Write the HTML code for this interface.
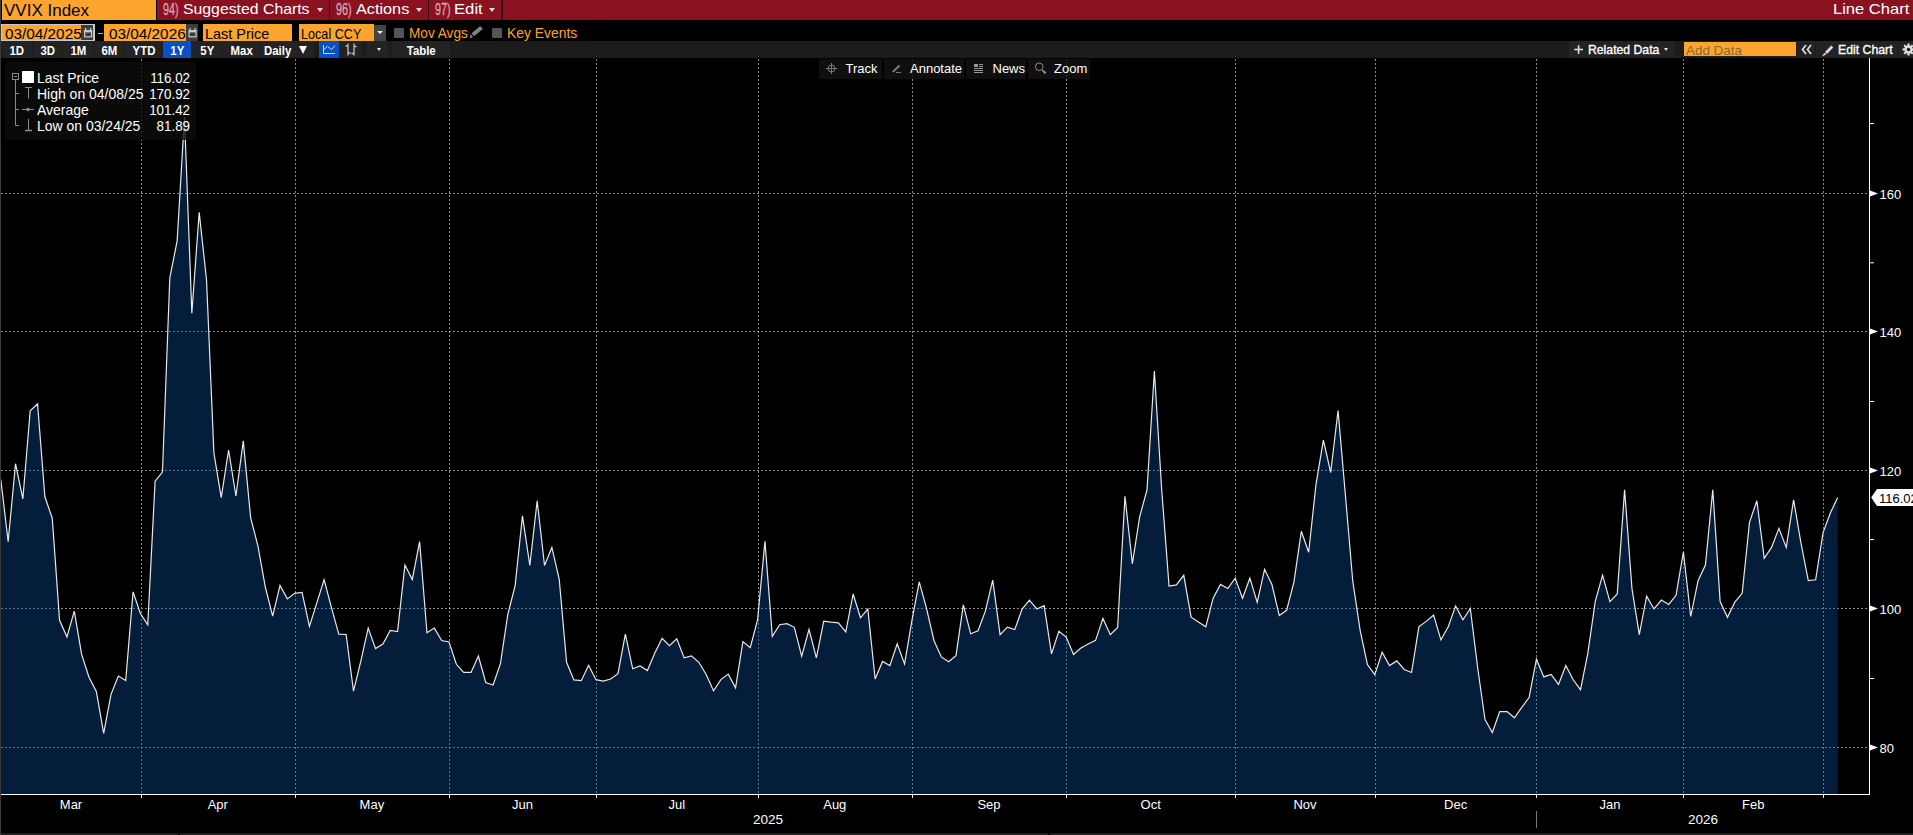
<!DOCTYPE html>
<html><head><meta charset="utf-8">
<style>
*{margin:0;padding:0;box-sizing:border-box}
html,body{width:1913px;height:835px;overflow:hidden;background:#000}
body{position:relative;font-family:"Liberation Sans",sans-serif;color:#fff}
.a{position:absolute;white-space:nowrap}
.btn{position:absolute;top:41px;height:17px;background:#232323;color:#fff;font-size:12px;line-height:17px;text-align:center;padding-top:1.5px}
.bt{display:inline-block;font-weight:bold;transform:scaleX(.95)}
.ml{position:absolute;top:797px;width:60px;text-align:center;font-size:13px;line-height:16px;color:#fff}
.g{stroke:#8a8a8a;stroke-width:1;stroke-dasharray:2 2}
.g2{stroke:#52739a;stroke-width:1;stroke-dasharray:2 2}
.yl{font-size:13px;fill:#fff;font-family:"Liberation Sans",sans-serif}
.tb{position:absolute;top:59px;height:20px;background:rgba(19,19,19,.8);font-size:13px;line-height:20px;color:#fff}
.lg{position:absolute;left:37px;width:151px;font-size:14.2px;line-height:16px;color:#fff}
.lt{display:inline-block;transform:scaleX(.985);transform-origin:0 0}
.lv{position:absolute;left:73px;width:80px;text-align:right;transform:scaleX(.94);transform-origin:100% 0}
</style></head><body>
<div class="a" style="left:0;top:0;width:1px;height:835px;background:#3a3a3a"></div>
<div class="a" style="left:1px;top:833px;width:177px;height:2px;background:#1e1e1e"></div>
<div class="a" style="left:180px;top:833px;width:868px;height:2px;background:#1e1e1e"></div>
<div class="a" style="left:1050px;top:833px;width:863px;height:2px;background:#1e1e1e"></div>

<!-- header row -->
<div class="a" style="left:2px;top:0;width:154px;height:20px;background:#fba52f"></div>
<div class="a" style="left:4.0px;top:2px;font-size:16.2px;line-height:16.2px;color:#000;transform:scaleX(1.05);transform-origin:0 0;">VVIX Index</div>
<div class="a" style="left:157px;top:0;width:1756px;height:20px;background:#8a1120"></div>
<div class="a" style="left:328.5px;top:0;width:1.5px;height:20px;background:#3a0a10"></div>
<div class="a" style="left:427.5px;top:0;width:1.5px;height:20px;background:#3a0a10"></div>
<div class="a" style="left:501px;top:0;width:2px;height:20px;background:#3a0a10"></div>
<div class="a" style="left:163px;top:1.6px;font-size:15.8px;line-height:15.8px;color:#d8a6b4;transform:scaleX(0.68);transform-origin:0 0;-webkit-text-stroke:0.3px #d8a6b4">94)</div>
<div class="a" style="left:183px;top:2.2px;font-size:14.5px;line-height:14.5px;color:#fff;transform:scaleX(1.09);transform-origin:0 0;">Suggested Charts</div>
<div class="a" style="left:316.5px;top:7.5px;border-left:3.0px solid transparent;border-right:3.0px solid transparent;border-top:4px solid #ddd"></div>
<div class="a" style="left:336px;top:1.6px;font-size:15.8px;line-height:15.8px;color:#d8a6b4;transform:scaleX(0.68);transform-origin:0 0;-webkit-text-stroke:0.3px #d8a6b4">96)</div>
<div class="a" style="left:356px;top:2.2px;font-size:14.5px;line-height:14.5px;color:#fff;transform:scaleX(1.12);transform-origin:0 0;">Actions</div>
<div class="a" style="left:415.5px;top:7.5px;border-left:3.0px solid transparent;border-right:3.0px solid transparent;border-top:4px solid #ddd"></div>
<div class="a" style="left:434.5px;top:1.6px;font-size:15.8px;line-height:15.8px;color:#d8a6b4;transform:scaleX(0.68);transform-origin:0 0;-webkit-text-stroke:0.3px #d8a6b4">97)</div>
<div class="a" style="left:454px;top:2.2px;font-size:14.5px;line-height:14.5px;color:#fff;transform:scaleX(1.15);transform-origin:0 0;">Edit</div>
<div class="a" style="left:488.5px;top:7.5px;border-left:3.0px solid transparent;border-right:3.0px solid transparent;border-top:4px solid #ddd"></div>
<div class="a" style="left:1832.5px;top:2.2px;font-size:14.5px;line-height:14.5px;color:#fff;transform:scaleX(1.14);transform-origin:0 0;">Line Chart</div>

<!-- row 2 -->
<div class="a" style="left:1px;top:24px;width:94px;height:17px;border:1px solid #c8c8c8;border-right-width:2px;background:#3c3c3c"></div>
<div class="a" style="left:2px;top:25px;width:79px;height:15px;background:#fba52f"></div>
<div class="a" style="left:4.6px;top:26.5px;font-size:14.2px;line-height:14.2px;color:#000;transform:scaleX(1.08);transform-origin:0 0;">03/04/2025</div>

<div class="a" style="left:98px;top:33px;width:5px;height:1.3px;background:#fba52f"></div>
<div class="a" style="left:104px;top:24px;width:82px;height:17px;background:#fba52f"></div>
<div class="a" style="left:108.6px;top:26.5px;font-size:14.2px;line-height:14.2px;color:#000;transform:scaleX(1.08);transform-origin:0 0;">03/04/2026</div>
<div class="a" style="left:186px;top:24px;width:12px;height:17px;background:#3c3c3c"></div>
<svg class="a" style="left:0;top:0" width="200" height="42">
<g fill="none" stroke="#c8c8c8" stroke-width="1.2">
<rect x="84.6" y="30.6" width="7" height="6.2"/><line x1="84.6" y1="31.6" x2="91.6" y2="31.6" stroke-width="1.6"/>
<line x1="85.6" y1="28" x2="85.6" y2="30.5" stroke-width="1.3"/><line x1="90.6" y1="28" x2="90.6" y2="30.5" stroke-width="1.3"/>
<rect x="189.1" y="30.6" width="7" height="6.2"/><line x1="189.1" y1="31.6" x2="196.1" y2="31.6" stroke-width="1.6"/>
<line x1="190.1" y1="28" x2="190.1" y2="30.5" stroke-width="1.3"/><line x1="195.1" y1="28" x2="195.1" y2="30.5" stroke-width="1.3"/>
</g></svg>
<div class="a" style="left:203px;top:24px;width:89px;height:17px;background:#fba52f"></div>
<div class="a" style="left:205px;top:26.5px;font-size:14.2px;line-height:14.2px;color:#000;transform:scaleX(1.02);transform-origin:0 0;">Last Price</div>
<div class="a" style="left:299px;top:24px;width:75px;height:17px;background:#fba52f"></div>
<div class="a" style="left:301.3px;top:26.5px;font-size:14.2px;line-height:14.2px;color:#000;transform:scaleX(0.89);transform-origin:0 0;">Local CCY</div>
<div class="a" style="left:374px;top:24.5px;width:12px;height:16px;background:#444"></div>
<div class="a" style="left:377px;top:31px;border-left:3.0px solid transparent;border-right:3.0px solid transparent;border-top:3.5px solid #eee"></div>
<div class="a" style="left:394px;top:28px;width:10px;height:10px;background:#555;border-radius:1px"></div>
<div class="a" style="left:409px;top:25.8px;font-size:14.2px;line-height:14.2px;color:#ffa21f;transform:scaleX(0.96);transform-origin:0 0;">Mov Avgs</div>
<svg class="a" style="left:466px;top:24px" width="20" height="17">
<path d="M8.1,12.3 L16.9,5.0 L14.2,1.9 L5.5,9.2 Z" fill="#808080"/>
<path d="M7.0,12.6 L4.6,9.9 L3.8,14.9 Z" fill="#808080"/>
</svg>
<div class="a" style="left:492px;top:28px;width:10px;height:10px;background:#555;border-radius:1px"></div>
<div class="a" style="left:506.5px;top:25.8px;font-size:14.2px;line-height:14.2px;color:#ffa21f;transform:scaleX(0.98);transform-origin:0 0;">Key Events</div>

<!-- row 3 -->
<div class="a" style="left:1px;top:41px;width:1912px;height:17px;background:#1d1c1a"></div>
<div class="btn" style="left:2px;width:30px"><span class="bt">1D</span></div>
<div class="btn" style="left:33px;width:29px"><span class="bt">3D</span></div>
<div class="btn" style="left:63px;width:30px"><span class="bt">1M</span></div>
<div class="btn" style="left:94px;width:30px"><span class="bt">6M</span></div>
<div class="btn" style="left:125px;width:37px"><span class="bt">YTD</span></div>
<div class="btn" style="left:163px;width:28px;background:#0850c4"><span class="bt">1Y</span></div>
<div class="btn" style="left:192px;width:30px"><span class="bt">5Y</span></div>
<div class="btn" style="left:223px;width:37px"><span class="bt">Max</span></div>
<div class="btn" style="left:261px;width:53px;text-align:left;padding-left:3px"><span class="bt" style="transform-origin:0 0">Daily</span></div>
<div class="a" style="left:299px;top:46px;border-left:4.5px solid transparent;border-right:4.5px solid transparent;border-top:8px solid #fff"></div>
<div class="btn" style="left:319px;width:20px;background:#0850c4"></div>
<svg class="a" style="left:319px;top:41px" width="20" height="17"><g fill="none" stroke="#c8dcf5" stroke-width="1">
<path d="M4.5,4 V12.5 H16"/><path d="M4.5,9 L8.5,5.3 L12.5,8.7 L16,4.5"/></g></svg>
<div class="btn" style="left:340px;width:22px"></div>
<svg class="a" style="left:340px;top:41px" width="22" height="17"><g fill="none" stroke="#c0c0c0" stroke-width="1.3">
<path d="M8,2.5 V14.5 M5.5,5 H8 M8,12 H10.5"/><path d="M14,2.5 V14.5 M14,5.5 H16.5 M14,12.5 H11.5"/></g></svg>
<div class="btn" style="left:367px;width:21px"></div>
<div class="a" style="left:377px;top:48px;border-left:2.5px solid transparent;border-right:2.5px solid transparent;border-top:3.5px solid #eee"></div>
<div class="btn" style="left:392px;width:58px"><span class="bt">Table</span></div>
<div class="btn" style="left:1569px;width:106px"></div>
<svg class="a" style="left:1569px;top:41px" width="20" height="17"><g stroke="#ddd" stroke-width="1.6"><line x1="5.3" y1="8.5" x2="14" y2="8.5"/><line x1="9.6" y1="4.2" x2="9.6" y2="12.9"/></g></svg>
<div class="a" style="left:1588px;top:43.8px;font-size:12.8px;line-height:12.8px;color:#fff;transform:scaleX(0.955);transform-origin:0 0;-webkit-text-stroke:0.35px #fff">Related Data</div>
<div class="a" style="left:1663.5px;top:48.4px;border-left:2.5px solid transparent;border-right:2.5px solid transparent;border-top:3.3px solid #ddd"></div>
<div class="a" style="left:1684px;top:42px;width:112px;height:14px;background:#fba52f"></div>
<div class="a" style="left:1686px;top:43.5px;font-size:13px;line-height:13px;color:#8a6a30;transform:scaleX(1.03);transform-origin:0 0;">Add Data</div>
<div class="btn" style="left:1797px;width:18px"></div>
<svg class="a" style="left:1797px;top:41px" width="18" height="17"><g fill="none" stroke="#ddd" stroke-width="1.7"><path d="M9,4 L5.5,8.5 L9,13"/><path d="M14,4 L10.5,8.5 L14,13"/></g></svg>
<div class="btn" style="left:1816px;width:81px"></div>
<svg class="a" style="left:1816px;top:41px" width="20" height="17">
<path d="M9,11 L15.3,4.5 L17.2,6.4 L11,12.9 Z" fill="#ddd"/><path d="M8.3,11.7 L10.3,13.6 L6,15.5 Z" fill="#ddd"/></svg>
<div class="a" style="left:1837.5px;top:43.8px;font-size:12.8px;line-height:12.8px;color:#fff;transform:scaleX(0.96);transform-origin:0 0;-webkit-text-stroke:0.35px #fff">Edit Chart</div>
<div class="btn" style="left:1898px;width:15px"></div>
<svg class="a" style="left:1898px;top:41px" width="15" height="17"><g transform="translate(10.5,8.5)"><circle r="4.2" fill="#ddd"/><g stroke="#ddd" stroke-width="2.2"><line x1="0" y1="-6" x2="0" y2="6"/><line x1="-6" y1="0" x2="6" y2="0"/><line x1="-4.3" y1="-4.3" x2="4.3" y2="4.3"/><line x1="-4.3" y1="4.3" x2="4.3" y2="-4.3"/></g><circle r="1.8" fill="#232323"/></g></svg>

<!-- chart -->
<svg class="a" style="left:0;top:0" width="1913" height="835" viewBox="0 0 1913 835">
<defs><clipPath id="cp"><rect x="1" y="58" width="1868" height="736"/></clipPath></defs>
<g clip-path="url(#cp)">
<clipPath id="fc"><path d="M0.81,479.50 L8.16,541.60 L15.51,463.70 L22.85,498.90 L30.20,410.80 L37.55,403.80 L44.90,496.80 L52.24,518.20 L59.59,620.30 L66.94,636.90 L74.28,611.20 L81.63,654.40 L88.98,677.20 L96.33,691.50 L103.68,733.40 L111.02,694.30 L118.37,676.10 L125.72,680.60 L133.06,591.90 L140.41,613.50 L147.76,624.90 L155.11,481.20 L162.46,472.10 L169.80,278.00 L177.15,240.90 L184.50,117.00 L191.84,313.20 L199.19,212.40 L206.54,280.00 L213.89,452.80 L221.24,497.60 L228.58,450.00 L235.93,496.00 L243.28,440.90 L250.62,517.60 L257.97,546.10 L265.32,587.00 L272.67,616.20 L280.01,585.40 L287.36,598.90 L294.71,593.30 L302.06,592.40 L309.41,626.50 L316.75,603.10 L324.10,579.60 L331.45,607.60 L338.80,634.20 L346.14,634.50 L353.49,691.10 L360.84,661.10 L368.19,628.10 L375.53,648.60 L382.88,644.00 L390.23,630.40 L397.57,631.50 L404.92,565.10 L412.27,579.60 L419.62,541.60 L426.97,632.70 L434.31,628.10 L441.66,640.50 L449.01,642.00 L456.36,664.30 L463.70,672.40 L471.05,672.40 L478.40,656.00 L485.75,682.50 L493.09,685.00 L500.44,663.60 L507.79,614.50 L515.13,585.60 L522.48,515.90 L529.83,565.50 L537.18,500.80 L544.52,565.50 L551.87,547.40 L559.22,579.30 L566.57,662.30 L573.91,679.90 L581.26,680.70 L588.61,665.30 L595.96,679.70 L603.30,681.10 L610.65,679.00 L618.00,673.70 L625.35,634.20 L632.69,668.80 L640.04,666.00 L647.39,670.50 L654.74,653.20 L662.08,638.30 L669.43,645.60 L676.78,638.90 L684.13,657.80 L691.47,655.80 L698.82,662.30 L706.17,674.50 L713.52,690.80 L720.87,679.60 L728.21,674.10 L735.56,687.80 L742.91,641.60 L750.25,647.70 L757.60,619.60 L764.95,541.20 L772.30,636.30 L779.64,624.70 L786.99,623.60 L794.34,627.30 L801.69,656.20 L809.03,629.30 L816.38,657.80 L823.73,621.20 L831.08,622.20 L838.42,622.90 L845.77,631.80 L853.12,594.00 L860.47,617.80 L867.81,609.00 L875.16,679.00 L882.51,661.40 L889.86,665.60 L897.20,643.80 L904.55,664.00 L911.90,620.70 L919.25,581.80 L926.59,608.60 L933.94,640.50 L941.29,656.90 L948.64,661.80 L955.99,655.60 L963.33,604.90 L970.68,633.80 L978.03,630.80 L985.38,611.10 L992.72,580.10 L1000.07,634.60 L1007.42,627.10 L1014.76,629.60 L1022.11,609.00 L1029.46,600.20 L1036.81,609.00 L1044.15,605.60 L1051.50,653.90 L1058.85,631.30 L1066.20,637.10 L1073.55,654.50 L1080.89,648.00 L1088.24,644.00 L1095.59,640.40 L1102.93,618.40 L1110.28,634.70 L1117.63,627.50 L1124.98,496.30 L1132.33,563.80 L1139.67,516.70 L1147.02,490.00 L1154.37,371.00 L1161.71,490.00 L1169.06,586.10 L1176.41,584.90 L1183.76,575.30 L1191.11,617.20 L1198.45,622.00 L1205.80,626.80 L1213.15,598.10 L1220.49,584.40 L1227.84,588.50 L1235.19,578.20 L1242.54,598.30 L1249.88,578.20 L1257.23,602.40 L1264.58,569.20 L1271.93,584.50 L1279.27,615.60 L1286.62,610.30 L1293.97,581.90 L1301.32,531.30 L1308.66,552.30 L1316.01,484.30 L1323.36,440.10 L1330.71,472.50 L1338.06,410.50 L1345.40,495.00 L1352.75,581.00 L1360.10,630.10 L1367.44,664.60 L1374.79,674.70 L1382.14,652.30 L1389.49,665.60 L1396.84,660.90 L1404.18,669.50 L1411.53,672.50 L1418.88,626.80 L1426.22,621.40 L1433.57,615.00 L1440.92,639.80 L1448.27,626.80 L1455.62,605.90 L1462.96,619.90 L1470.31,608.50 L1477.66,667.80 L1485.00,719.60 L1492.35,732.50 L1499.70,711.60 L1507.05,711.60 L1514.39,717.80 L1521.74,707.30 L1529.09,697.60 L1536.44,659.20 L1543.79,676.90 L1551.13,674.50 L1558.48,684.40 L1565.83,665.50 L1573.17,679.80 L1580.52,689.70 L1587.87,653.10 L1595.22,601.60 L1602.57,575.20 L1609.91,601.60 L1617.26,593.90 L1624.61,489.80 L1631.95,588.40 L1639.30,634.60 L1646.65,596.10 L1654.00,609.00 L1661.35,600.00 L1668.69,604.40 L1676.04,595.30 L1683.39,552.00 L1690.73,616.50 L1698.08,580.70 L1705.43,565.00 L1712.78,489.80 L1720.12,601.60 L1727.47,617.30 L1734.82,602.20 L1742.17,593.30 L1749.51,522.30 L1756.86,500.80 L1764.21,558.30 L1771.56,547.40 L1778.90,528.30 L1786.25,547.40 L1793.60,499.80 L1800.95,543.00 L1808.30,580.60 L1815.64,579.80 L1822.99,532.80 L1830.34,513.00 L1837.68,497.50 L1837.68,794 L0.81,794 Z"/></clipPath>
<path d="M0.81,479.50 L8.16,541.60 L15.51,463.70 L22.85,498.90 L30.20,410.80 L37.55,403.80 L44.90,496.80 L52.24,518.20 L59.59,620.30 L66.94,636.90 L74.28,611.20 L81.63,654.40 L88.98,677.20 L96.33,691.50 L103.68,733.40 L111.02,694.30 L118.37,676.10 L125.72,680.60 L133.06,591.90 L140.41,613.50 L147.76,624.90 L155.11,481.20 L162.46,472.10 L169.80,278.00 L177.15,240.90 L184.50,117.00 L191.84,313.20 L199.19,212.40 L206.54,280.00 L213.89,452.80 L221.24,497.60 L228.58,450.00 L235.93,496.00 L243.28,440.90 L250.62,517.60 L257.97,546.10 L265.32,587.00 L272.67,616.20 L280.01,585.40 L287.36,598.90 L294.71,593.30 L302.06,592.40 L309.41,626.50 L316.75,603.10 L324.10,579.60 L331.45,607.60 L338.80,634.20 L346.14,634.50 L353.49,691.10 L360.84,661.10 L368.19,628.10 L375.53,648.60 L382.88,644.00 L390.23,630.40 L397.57,631.50 L404.92,565.10 L412.27,579.60 L419.62,541.60 L426.97,632.70 L434.31,628.10 L441.66,640.50 L449.01,642.00 L456.36,664.30 L463.70,672.40 L471.05,672.40 L478.40,656.00 L485.75,682.50 L493.09,685.00 L500.44,663.60 L507.79,614.50 L515.13,585.60 L522.48,515.90 L529.83,565.50 L537.18,500.80 L544.52,565.50 L551.87,547.40 L559.22,579.30 L566.57,662.30 L573.91,679.90 L581.26,680.70 L588.61,665.30 L595.96,679.70 L603.30,681.10 L610.65,679.00 L618.00,673.70 L625.35,634.20 L632.69,668.80 L640.04,666.00 L647.39,670.50 L654.74,653.20 L662.08,638.30 L669.43,645.60 L676.78,638.90 L684.13,657.80 L691.47,655.80 L698.82,662.30 L706.17,674.50 L713.52,690.80 L720.87,679.60 L728.21,674.10 L735.56,687.80 L742.91,641.60 L750.25,647.70 L757.60,619.60 L764.95,541.20 L772.30,636.30 L779.64,624.70 L786.99,623.60 L794.34,627.30 L801.69,656.20 L809.03,629.30 L816.38,657.80 L823.73,621.20 L831.08,622.20 L838.42,622.90 L845.77,631.80 L853.12,594.00 L860.47,617.80 L867.81,609.00 L875.16,679.00 L882.51,661.40 L889.86,665.60 L897.20,643.80 L904.55,664.00 L911.90,620.70 L919.25,581.80 L926.59,608.60 L933.94,640.50 L941.29,656.90 L948.64,661.80 L955.99,655.60 L963.33,604.90 L970.68,633.80 L978.03,630.80 L985.38,611.10 L992.72,580.10 L1000.07,634.60 L1007.42,627.10 L1014.76,629.60 L1022.11,609.00 L1029.46,600.20 L1036.81,609.00 L1044.15,605.60 L1051.50,653.90 L1058.85,631.30 L1066.20,637.10 L1073.55,654.50 L1080.89,648.00 L1088.24,644.00 L1095.59,640.40 L1102.93,618.40 L1110.28,634.70 L1117.63,627.50 L1124.98,496.30 L1132.33,563.80 L1139.67,516.70 L1147.02,490.00 L1154.37,371.00 L1161.71,490.00 L1169.06,586.10 L1176.41,584.90 L1183.76,575.30 L1191.11,617.20 L1198.45,622.00 L1205.80,626.80 L1213.15,598.10 L1220.49,584.40 L1227.84,588.50 L1235.19,578.20 L1242.54,598.30 L1249.88,578.20 L1257.23,602.40 L1264.58,569.20 L1271.93,584.50 L1279.27,615.60 L1286.62,610.30 L1293.97,581.90 L1301.32,531.30 L1308.66,552.30 L1316.01,484.30 L1323.36,440.10 L1330.71,472.50 L1338.06,410.50 L1345.40,495.00 L1352.75,581.00 L1360.10,630.10 L1367.44,664.60 L1374.79,674.70 L1382.14,652.30 L1389.49,665.60 L1396.84,660.90 L1404.18,669.50 L1411.53,672.50 L1418.88,626.80 L1426.22,621.40 L1433.57,615.00 L1440.92,639.80 L1448.27,626.80 L1455.62,605.90 L1462.96,619.90 L1470.31,608.50 L1477.66,667.80 L1485.00,719.60 L1492.35,732.50 L1499.70,711.60 L1507.05,711.60 L1514.39,717.80 L1521.74,707.30 L1529.09,697.60 L1536.44,659.20 L1543.79,676.90 L1551.13,674.50 L1558.48,684.40 L1565.83,665.50 L1573.17,679.80 L1580.52,689.70 L1587.87,653.10 L1595.22,601.60 L1602.57,575.20 L1609.91,601.60 L1617.26,593.90 L1624.61,489.80 L1631.95,588.40 L1639.30,634.60 L1646.65,596.10 L1654.00,609.00 L1661.35,600.00 L1668.69,604.40 L1676.04,595.30 L1683.39,552.00 L1690.73,616.50 L1698.08,580.70 L1705.43,565.00 L1712.78,489.80 L1720.12,601.60 L1727.47,617.30 L1734.82,602.20 L1742.17,593.30 L1749.51,522.30 L1756.86,500.80 L1764.21,558.30 L1771.56,547.40 L1778.90,528.30 L1786.25,547.40 L1793.60,499.80 L1800.95,543.00 L1808.30,580.60 L1815.64,579.80 L1822.99,532.80 L1830.34,513.00 L1837.68,497.50 L1837.68,794 L0.81,794 Z" fill="#041d3a"/>
<line x1="141.5" y1="59" x2="141.5" y2="794" class="g"/><line x1="295.5" y1="59" x2="295.5" y2="794" class="g"/><line x1="449.5" y1="59" x2="449.5" y2="794" class="g"/><line x1="596.5" y1="59" x2="596.5" y2="794" class="g"/><line x1="758.5" y1="59" x2="758.5" y2="794" class="g"/><line x1="912.5" y1="59" x2="912.5" y2="794" class="g"/><line x1="1066.5" y1="59" x2="1066.5" y2="794" class="g"/><line x1="1235.5" y1="59" x2="1235.5" y2="794" class="g"/><line x1="1375.5" y1="59" x2="1375.5" y2="794" class="g"/><line x1="1536.5" y1="59" x2="1536.5" y2="794" class="g"/><line x1="1683.5" y1="59" x2="1683.5" y2="794" class="g"/><line x1="1823.5" y1="59" x2="1823.5" y2="794" class="g"/><line x1="1" y1="193.5" x2="1869" y2="193.5" class="g"/><line x1="1" y1="331.5" x2="1869" y2="331.5" class="g"/><line x1="1" y1="470.5" x2="1869" y2="470.5" class="g"/><line x1="1" y1="608.5" x2="1869" y2="608.5" class="g"/><line x1="1" y1="747.5" x2="1869" y2="747.5" class="g"/>
<g clip-path="url(#fc)" style="--c:1"><line x1="141.5" y1="59" x2="141.5" y2="794" class="g2"/><line x1="295.5" y1="59" x2="295.5" y2="794" class="g2"/><line x1="449.5" y1="59" x2="449.5" y2="794" class="g2"/><line x1="596.5" y1="59" x2="596.5" y2="794" class="g2"/><line x1="758.5" y1="59" x2="758.5" y2="794" class="g2"/><line x1="912.5" y1="59" x2="912.5" y2="794" class="g2"/><line x1="1066.5" y1="59" x2="1066.5" y2="794" class="g2"/><line x1="1235.5" y1="59" x2="1235.5" y2="794" class="g2"/><line x1="1375.5" y1="59" x2="1375.5" y2="794" class="g2"/><line x1="1536.5" y1="59" x2="1536.5" y2="794" class="g2"/><line x1="1683.5" y1="59" x2="1683.5" y2="794" class="g2"/><line x1="1823.5" y1="59" x2="1823.5" y2="794" class="g2"/><line x1="1" y1="193.5" x2="1869" y2="193.5" class="g2"/><line x1="1" y1="331.5" x2="1869" y2="331.5" class="g2"/><line x1="1" y1="470.5" x2="1869" y2="470.5" class="g2"/><line x1="1" y1="608.5" x2="1869" y2="608.5" class="g2"/><line x1="1" y1="747.5" x2="1869" y2="747.5" class="g2"/></g>
<path d="M0.81,479.50 L8.16,541.60 L15.51,463.70 L22.85,498.90 L30.20,410.80 L37.55,403.80 L44.90,496.80 L52.24,518.20 L59.59,620.30 L66.94,636.90 L74.28,611.20 L81.63,654.40 L88.98,677.20 L96.33,691.50 L103.68,733.40 L111.02,694.30 L118.37,676.10 L125.72,680.60 L133.06,591.90 L140.41,613.50 L147.76,624.90 L155.11,481.20 L162.46,472.10 L169.80,278.00 L177.15,240.90 L184.50,117.00 L191.84,313.20 L199.19,212.40 L206.54,280.00 L213.89,452.80 L221.24,497.60 L228.58,450.00 L235.93,496.00 L243.28,440.90 L250.62,517.60 L257.97,546.10 L265.32,587.00 L272.67,616.20 L280.01,585.40 L287.36,598.90 L294.71,593.30 L302.06,592.40 L309.41,626.50 L316.75,603.10 L324.10,579.60 L331.45,607.60 L338.80,634.20 L346.14,634.50 L353.49,691.10 L360.84,661.10 L368.19,628.10 L375.53,648.60 L382.88,644.00 L390.23,630.40 L397.57,631.50 L404.92,565.10 L412.27,579.60 L419.62,541.60 L426.97,632.70 L434.31,628.10 L441.66,640.50 L449.01,642.00 L456.36,664.30 L463.70,672.40 L471.05,672.40 L478.40,656.00 L485.75,682.50 L493.09,685.00 L500.44,663.60 L507.79,614.50 L515.13,585.60 L522.48,515.90 L529.83,565.50 L537.18,500.80 L544.52,565.50 L551.87,547.40 L559.22,579.30 L566.57,662.30 L573.91,679.90 L581.26,680.70 L588.61,665.30 L595.96,679.70 L603.30,681.10 L610.65,679.00 L618.00,673.70 L625.35,634.20 L632.69,668.80 L640.04,666.00 L647.39,670.50 L654.74,653.20 L662.08,638.30 L669.43,645.60 L676.78,638.90 L684.13,657.80 L691.47,655.80 L698.82,662.30 L706.17,674.50 L713.52,690.80 L720.87,679.60 L728.21,674.10 L735.56,687.80 L742.91,641.60 L750.25,647.70 L757.60,619.60 L764.95,541.20 L772.30,636.30 L779.64,624.70 L786.99,623.60 L794.34,627.30 L801.69,656.20 L809.03,629.30 L816.38,657.80 L823.73,621.20 L831.08,622.20 L838.42,622.90 L845.77,631.80 L853.12,594.00 L860.47,617.80 L867.81,609.00 L875.16,679.00 L882.51,661.40 L889.86,665.60 L897.20,643.80 L904.55,664.00 L911.90,620.70 L919.25,581.80 L926.59,608.60 L933.94,640.50 L941.29,656.90 L948.64,661.80 L955.99,655.60 L963.33,604.90 L970.68,633.80 L978.03,630.80 L985.38,611.10 L992.72,580.10 L1000.07,634.60 L1007.42,627.10 L1014.76,629.60 L1022.11,609.00 L1029.46,600.20 L1036.81,609.00 L1044.15,605.60 L1051.50,653.90 L1058.85,631.30 L1066.20,637.10 L1073.55,654.50 L1080.89,648.00 L1088.24,644.00 L1095.59,640.40 L1102.93,618.40 L1110.28,634.70 L1117.63,627.50 L1124.98,496.30 L1132.33,563.80 L1139.67,516.70 L1147.02,490.00 L1154.37,371.00 L1161.71,490.00 L1169.06,586.10 L1176.41,584.90 L1183.76,575.30 L1191.11,617.20 L1198.45,622.00 L1205.80,626.80 L1213.15,598.10 L1220.49,584.40 L1227.84,588.50 L1235.19,578.20 L1242.54,598.30 L1249.88,578.20 L1257.23,602.40 L1264.58,569.20 L1271.93,584.50 L1279.27,615.60 L1286.62,610.30 L1293.97,581.90 L1301.32,531.30 L1308.66,552.30 L1316.01,484.30 L1323.36,440.10 L1330.71,472.50 L1338.06,410.50 L1345.40,495.00 L1352.75,581.00 L1360.10,630.10 L1367.44,664.60 L1374.79,674.70 L1382.14,652.30 L1389.49,665.60 L1396.84,660.90 L1404.18,669.50 L1411.53,672.50 L1418.88,626.80 L1426.22,621.40 L1433.57,615.00 L1440.92,639.80 L1448.27,626.80 L1455.62,605.90 L1462.96,619.90 L1470.31,608.50 L1477.66,667.80 L1485.00,719.60 L1492.35,732.50 L1499.70,711.60 L1507.05,711.60 L1514.39,717.80 L1521.74,707.30 L1529.09,697.60 L1536.44,659.20 L1543.79,676.90 L1551.13,674.50 L1558.48,684.40 L1565.83,665.50 L1573.17,679.80 L1580.52,689.70 L1587.87,653.10 L1595.22,601.60 L1602.57,575.20 L1609.91,601.60 L1617.26,593.90 L1624.61,489.80 L1631.95,588.40 L1639.30,634.60 L1646.65,596.10 L1654.00,609.00 L1661.35,600.00 L1668.69,604.40 L1676.04,595.30 L1683.39,552.00 L1690.73,616.50 L1698.08,580.70 L1705.43,565.00 L1712.78,489.80 L1720.12,601.60 L1727.47,617.30 L1734.82,602.20 L1742.17,593.30 L1749.51,522.30 L1756.86,500.80 L1764.21,558.30 L1771.56,547.40 L1778.90,528.30 L1786.25,547.40 L1793.60,499.80 L1800.95,543.00 L1808.30,580.60 L1815.64,579.80 L1822.99,532.80 L1830.34,513.00 L1837.68,497.50" fill="none" stroke="#e8e8e8" stroke-width="1.2" stroke-linejoin="miter"/>
</g>
<line x1="1" y1="794.5" x2="1870" y2="794.5" stroke="#fff" stroke-width="1"/>
<line x1="1869.5" y1="58" x2="1869.5" y2="795" stroke="#fff" stroke-width="1"/>
<line x1="141.5" y1="794" x2="141.5" y2="798" stroke="#fff" stroke-width="1"/><line x1="295.5" y1="794" x2="295.5" y2="798" stroke="#fff" stroke-width="1"/><line x1="449.5" y1="794" x2="449.5" y2="798" stroke="#fff" stroke-width="1"/><line x1="596.5" y1="794" x2="596.5" y2="798" stroke="#fff" stroke-width="1"/><line x1="758.5" y1="794" x2="758.5" y2="798" stroke="#fff" stroke-width="1"/><line x1="912.5" y1="794" x2="912.5" y2="798" stroke="#fff" stroke-width="1"/><line x1="1066.5" y1="794" x2="1066.5" y2="798" stroke="#fff" stroke-width="1"/><line x1="1235.5" y1="794" x2="1235.5" y2="798" stroke="#fff" stroke-width="1"/><line x1="1375.5" y1="794" x2="1375.5" y2="798" stroke="#fff" stroke-width="1"/><line x1="1536.5" y1="794" x2="1536.5" y2="798" stroke="#fff" stroke-width="1"/><line x1="1683.5" y1="794" x2="1683.5" y2="798" stroke="#fff" stroke-width="1"/><line x1="1823.5" y1="794" x2="1823.5" y2="798" stroke="#fff" stroke-width="1"/><line x1="1870" y1="123.5" x2="1874" y2="123.5" stroke="#fff"/><line x1="1870" y1="262.8" x2="1874" y2="262.8" stroke="#fff"/><line x1="1870" y1="401.5" x2="1874" y2="401.5" stroke="#fff"/><line x1="1870" y1="539.5" x2="1874" y2="539.5" stroke="#fff"/><line x1="1870" y1="678.5" x2="1874" y2="678.5" stroke="#fff"/><path d="M1870,190.5 L1878,193.5 L1870,196.5 Z" fill="#fff"/><text x="1879.5" y="199.0" class="yl">160</text><path d="M1870,328.5 L1878,331.5 L1870,334.5 Z" fill="#fff"/><text x="1879.5" y="337.0" class="yl">140</text><path d="M1870,467.5 L1878,470.5 L1870,473.5 Z" fill="#fff"/><text x="1879.5" y="476.0" class="yl">120</text><path d="M1870,605.5 L1878,608.5 L1870,611.5 Z" fill="#fff"/><text x="1879.5" y="614.0" class="yl">100</text><path d="M1870,744.5 L1878,747.5 L1870,750.5 Z" fill="#fff"/><text x="1879.5" y="753.0" class="yl">80</text>
<line x1="1536.5" y1="811" x2="1536.5" y2="828" stroke="#777" stroke-width="1"/>
<path d="M1871.2,497.5 L1877,489 L1913,489 L1913,506 L1877,506 Z" fill="#fff"/>
<text x="1879" y="502.5" font-size="13" fill="#000" font-family="Liberation Sans">116.02</text>
</svg>
<div class="ml" style="left:41.0px">Mar</div><div class="ml" style="left:187.8px">Apr</div><div class="ml" style="left:341.9px">May</div><div class="ml" style="left:492.5px">Jun</div><div class="ml" style="left:646.8px">Jul</div><div class="ml" style="left:804.8px">Aug</div><div class="ml" style="left:959.0px">Sep</div><div class="ml" style="left:1120.7px">Oct</div><div class="ml" style="left:1275.0px">Nov</div><div class="ml" style="left:1425.6px">Dec</div><div class="ml" style="left:1579.9px">Jan</div><div class="ml" style="left:1723.2px">Feb</div>
<div class="a" style="left:738px;top:812px;width:60px;text-align:center;font-size:13.5px;line-height:16px">2025</div>
<div class="a" style="left:1673px;top:812px;width:60px;text-align:center;font-size:13.5px;line-height:16px">2026</div>

<!-- toolbar -->
<div class="tb" style="left:819px;width:63px;padding-left:26.5px">Track</div>
<div class="tb" style="left:884px;width:80px;padding-left:26px">Annotate</div>
<div class="tb" style="left:966px;width:60px;padding-left:26.5px">News</div>
<div class="tb" style="left:1028px;width:62px;padding-left:26px">Zoom</div>
<svg class="a" style="left:0;top:0" width="1100" height="82">
<g stroke="#7a7a7a" fill="none" stroke-width="1">
<circle cx="831.5" cy="68.5" r="3.5"/><line x1="825.8" y1="68.5" x2="837.2" y2="68.5"/><line x1="831.5" y1="63" x2="831.5" y2="74"/>
<line x1="892.8" y1="72" x2="899.5" y2="65.5" stroke-width="2"/><line x1="896" y1="72.5" x2="901" y2="72.5"/>
</g>
<g fill="#9a9a9a"><rect x="974" y="64" width="4" height="3"/><rect x="979" y="64" width="4" height="1"/><rect x="979" y="66" width="4" height="1"/>
<rect x="974" y="68" width="9" height="1"/><rect x="974" y="70" width="9" height="1"/><rect x="974" y="72" width="9" height="1"/></g>
<g stroke="#8a8a8a" fill="none"><circle cx="1039.2" cy="66.8" r="3.8" stroke-width="1"/><line x1="1042.5" y1="70.3" x2="1045.6" y2="73.5" stroke-width="2"/></g>
</svg>

<!-- legend -->
<div class="a" style="left:5px;top:62px;width:191px;height:78px;background:rgba(13,13,13,.78);border-radius:4px"></div>
<div class="a" style="left:22px;top:71px;width:12px;height:12px;background:#fff"></div>
<svg class="a" style="left:0;top:60px" width="40" height="80"><g stroke="#8a8a8a" fill="none" stroke-width="1">
<rect x="12.5" y="13.5" width="6" height="6"/><line x1="14" y1="16.5" x2="17" y2="16.5"/>
<line x1="15.5" y1="20" x2="15.5" y2="65.5"/><line x1="15.5" y1="33.5" x2="19" y2="33.5"/><line x1="15.5" y1="49.5" x2="19" y2="49.5"/><line x1="15.5" y1="65.5" x2="19" y2="65.5"/>
<line x1="25" y1="27.5" x2="32" y2="27.5"/><line x1="28.5" y1="27.5" x2="28.5" y2="38.5"/>
<line x1="22" y1="49.5" x2="34" y2="49.5"/>
<line x1="28.5" y1="59" x2="28.5" y2="70"/><path d="M25,70.5 L32,70.5" stroke-width="1.5"/>
</g><circle cx="28" cy="49.5" r="1.8" fill="#8a8a8a"/></svg>
<div class="lg" style="top:70px"><span class="lt">Last Price</span><span class="lv">116.02</span></div>
<div class="lg" style="top:86px"><span class="lt">High on 04/08/25</span><span class="lv">170.92</span></div>
<div class="lg" style="top:102px"><span class="lt">Average</span><span class="lv">101.42</span></div>
<div class="lg" style="top:118px"><span class="lt">Low on 03/24/25</span><span class="lv">81.89</span></div>
</body></html>
